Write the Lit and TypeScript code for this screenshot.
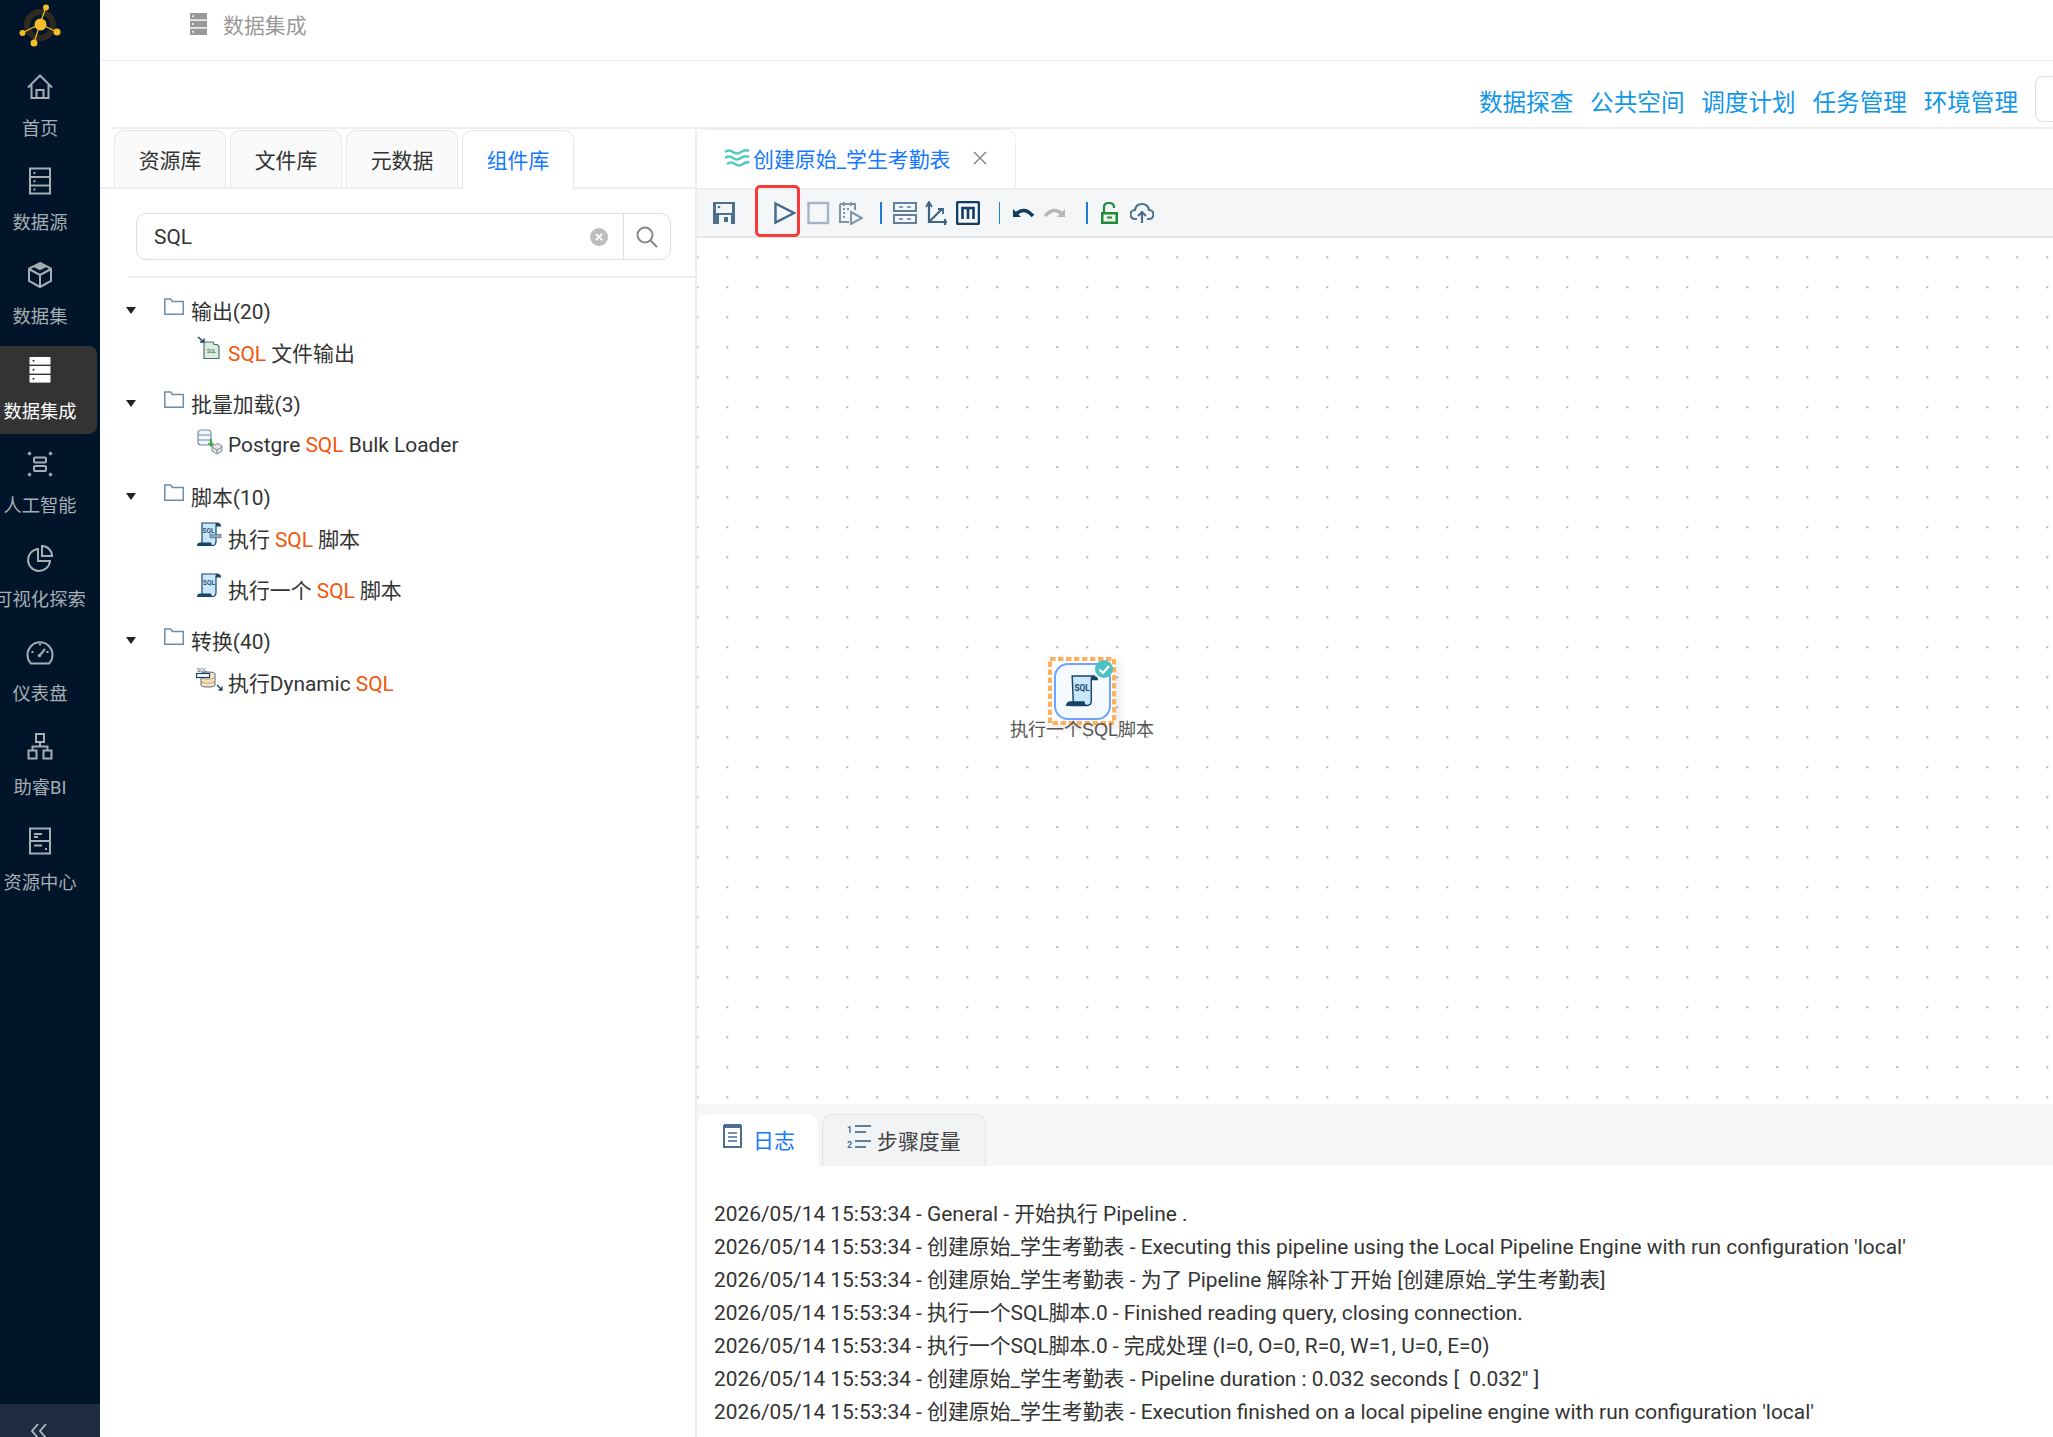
import { LitElement, html, css, svg } from "lit";
import { customElement } from "lit/decorators.js";

const navIcons: Record<string, any> = {
  home: html`<svg viewBox="0 0 28 28" class="ni"><path d="M2 14.5 14 2.5l12 12M5.5 12v13h17V12M10.5 25v-8h7v8"/></svg>`,
  server: html`<svg viewBox="0 0 28 28" class="ni"><rect x="4" y="1.5" width="20" height="25"/><path d="M4 10h20M4 18.500h20"/><path d="M7.500 6h2M7.500 14.200h2M7.500 22.500h2"/></svg>`,
  cube: html`<svg viewBox="0 0 28 28" class="ni"><path d="M14 2 25 7.500v12.500L14 26 3 20V7.500Z"/><path d="M3 8l11 6 11-6M14 14v12"/><path d="M14 3l6 3-6 3-6-3Z" class="fill"/></svg>`,
  active: html`<svg viewBox="0 0 28 28" class="nf"><rect x="3.500" y="1" width="21" height="7.600" fill="#fff"/><rect x="3.500" y="10" width="21" height="7.600" fill="#fff"/><rect x="3.500" y="19" width="21" height="7.600" fill="#fff"/><circle cx="7.500" cy="4.800" r="1" fill="#333"/><circle cx="7.500" cy="13.800" r="1" fill="#333"/><circle cx="7.500" cy="22.800" r="1" fill="#333"/></svg>`,
  ai: html`<svg viewBox="0 0 28 28" class="ni"><circle cx="3.500" cy="3.500" r="1.500" class="fill"/><circle cx="24.500" cy="3.500" r="1.500" class="fill"/><circle cx="3.500" cy="24.500" r="1.500" class="fill"/><circle cx="24.500" cy="24.500" r="1.500" class="fill"/><rect x="8" y="7.500" width="12" height="5" rx="1"/><rect x="8" y="16" width="12" height="5" rx="1"/></svg>`,
  pie: html`<svg viewBox="0 0 28 28" class="ni"><path d="M12 5A11 11 0 1 0 24 17H12Z"/><path d="M16 2a10 10 0 0 1 10 10H16Z"/></svg>`,
  gauge: html`<svg viewBox="0 0 28 28" class="ni"><path d="M5 25.500A12.500 12.500 0 1 1 23 25.500Z"/><path d="M14 17l5-6" /><path d="M14 5.500v2M5.500 14h2M20.500 14h2"/><circle cx="13.500" cy="17.500" r="1.500" class="fill"/></svg>`,
  org: html`<svg viewBox="0 0 28 28" class="ni"><rect x="10" y="2" width="8" height="8"/><rect x="2.500" y="18.500" width="8" height="8"/><rect x="17.500" y="18.500" width="8" height="8"/><path d="M14 10v4.500M6.500 18.500v-4h15v4"/></svg>`,
  res: html`<svg viewBox="0 0 28 28" class="ni"><rect x="4" y="1.500" width="20" height="25"/><path d="M4 14h20M8 7h8M8 10h4M8 18.500h8"/><path d="M19 22h2"/></svg>`,
};

const scroll = (s: number) => html`<svg width=${s} height=${s} viewBox="0 0 31 31">
  <path d="M6 1h20q-1.500 1-1.500 3v21q0 4-3.500 4.500H4q3-.5 3-4Z" fill="#c9e7fb" stroke="#174568" stroke-width="1.400"/>
  <path d="M24 1h3q4 0 4 3.500v.5h-6Z" fill="#174568"/>
  <path d="M0 30q0-4 4-4.500h14q0 3 3 4.500Z" fill="#174568"/>
  <text x="15.500" y="15.500" text-anchor="middle" font-family="Roboto, sans-serif" font-size="8" font-weight="700" fill="#174568">SQL</text>
</svg>`;

const leafIcons: Record<string, any> = {
  file: html`<svg width="26" height="26" viewBox="0 0 26 26"><path d="M1 1l6 5M7 2.500V6H3" fill="none" stroke="#1e3f5c" stroke-width="1.400"/><path d="M7 6h9l1 2.500 3 0 2 2v12H7Z" fill="#d9efdd" stroke="#4d6c84" stroke-width="1.200"/><text x="14.500" y="17" text-anchor="middle" font-family="Roboto, sans-serif" font-size="5" fill="#345">SQL</text></svg>`,
  bulk: html`<svg width="26" height="26" viewBox="0 0 26 26"><rect x="1" y="1" width="13" height="15" rx="3" fill="#f0f6fb" stroke="#6f8ba3" stroke-width="1.100"/><path d="M1 6h13M1 11h13" stroke="#6f8ba3" fill="none"/><path d="M14 10v6" stroke="#2aa52a" stroke-width="1.600"/><path d="M11.500 14l2.500 3 2.500-3" fill="none" stroke="#2aa52a" stroke-width="1.200"/><path d="M15 17l6-2.500 4 2.500v5l-5 3-5-3Z" fill="#e6e6e6" stroke="#7b8b99"/><path d="M15 18l5 3 5-3M20 21v4" fill="none" stroke="#7b8b99"/></svg>`,
  run: html`<svg width="25" height="25" viewBox="0 0 25 25"><path d="M5 1h15q-1 .7-1 2.500v16q0 3-2.500 4H3q2-.7 2-3Z" fill="#c9e7fb" stroke="#174568" stroke-width="1.200"/><path d="M19 1h2q3 0 3 3v.5h-5Z" fill="#174568"/><path d="M0 24q0-3.500 3-3.500h11q0 2 2.500 3.500Z" fill="#174568"/><text x="11.500" y="11" text-anchor="middle" font-family="Roboto, sans-serif" font-size="6.400" font-weight="600" fill="#174568">SQL</text><rect x="13" y="12.500" width="11" height="3.400" fill="#8ea7bc" stroke="#4d6c84" stroke-width=".6"/></svg>`,
  one: html`<svg width="25" height="25" viewBox="0 0 25 25"><path d="M5 1h15q-1 .7-1 2.500v16q0 3-2.500 4H3q2-.7 2-3Z" fill="#c9e7fb" stroke="#174568" stroke-width="1.200"/><path d="M19 1h2q3 0 3 3v.5h-5Z" fill="#174568"/><path d="M0 24q0-3.500 3-3.500h11q0 2 2.500 3.500Z" fill="#174568"/><text x="12" y="12" text-anchor="middle" font-family="Roboto, sans-serif" font-size="6.400" font-weight="600" fill="#174568">SQL</text></svg>`,
  dyn: html`<svg width="28" height="26" viewBox="0 0 28 26"><text x="1" y="5.500" font-family="Roboto, sans-serif" font-size="5.500" fill="#456">SQL</text><path d="M5 8q0-2 7-2t7 2v11q0 2-7 2t-7-2Z" fill="#fae2bd" stroke="#4d6c84"/><path d="M5 12q7 3 14 0M5 16q7 3 14 0" fill="none" stroke="#8a7a5a" stroke-width=".6"/><rect x=".5" y="7.500" width="13" height="4" fill="#fff" stroke="#1e4060" stroke-width="1.200"/><path d="M21 19l5 5M26 20.500V24h-3.500" fill="none" stroke="#1e3f5c" stroke-width="1.300"/></svg>`,
};

interface Leaf { icon: string; parts: (string | { sql: string })[]; gap?: boolean }
const S = { sql: "SQL" };
const tree: { name: string; leaves: Leaf[] }[] = [
  { name: "输出(20)", leaves: [{ icon: "file", parts: [S, " 文件输出"] }] },
  { name: "批量加载(3)", leaves: [{ icon: "bulk", parts: ["Postgre ", S, " Bulk Loader"] }] },
  { name: "脚本(10)", leaves: [{ icon: "run", parts: ["执行 ", S, " 脚本"] }, { icon: "one", parts: ["执行一个 ", S, " 脚本"], gap: true }] },
  { name: "转换(40)", leaves: [{ icon: "dyn", parts: ["执行Dynamic ", S] }] },
];

const logs = [
  "2026/05/14 15:53:34 - General - 开始执行 Pipeline .",
  "2026/05/14 15:53:34 - 创建原始_学生考勤表 - Executing this pipeline using the Local Pipeline Engine with run configuration 'local'",
  "2026/05/14 15:53:34 - 创建原始_学生考勤表 - 为了 Pipeline 解除补丁开始 [创建原始_学生考勤表]",
  "2026/05/14 15:53:34 - 执行一个SQL脚本.0 - Finished reading query, closing connection.",
  "2026/05/14 15:53:34 - 执行一个SQL脚本.0 - 完成处理 (I=0, O=0, R=0, W=1, U=0, E=0)",
  "2026/05/14 15:53:34 - 创建原始_学生考勤表 - Pipeline duration : 0.032 seconds [  0.032\" ]",
  "2026/05/14 15:53:34 - 创建原始_学生考勤表 - Execution finished on a local pipeline engine with run configuration 'local'",
];

const nav = [
  ["home", "首页"], ["server", "数据源"], ["cube", "数据集"], ["active", "数据集成"], ["ai", "人工智能"],
  ["pie", "可视化探索"], ["gauge", "仪表盘"], ["org", "助睿BI"], ["res", "资源中心"],
];

const t = (d: any, ml = 0) => html`<svg width="24" height="24" viewBox="0 0 24 24" style="margin-left:${ml}px">${d}</svg>`;

@customElement("app-root")
export class AppRoot extends LitElement {
  static styles = css`
    :host {
      display: flex; width: 2053px; height: 1437px; overflow: hidden; background: #fff;
      font-family: Roboto, "Noto Sans CJK SC", sans-serif; color: #333;
    }
    .side { width: 100px; flex: none; background: #00152a; display: flex; flex-direction: column; position: relative; }
    .logo { height: 63px; flex: none; display: block; }
    .navlist { display: flex; flex-direction: column; gap: 6.200px; flex: 1; }
    .item { width: 97px; height: 88px; display: flex; flex-direction: column; align-items: center; color: #a6adb4; font-size: 18.300px; border-radius: 0 8px 8px 0; padding: 10px 17px 0 0; box-sizing: border-box; }
    .item span { text-align: center; line-height: 26px; margin-top: 15px; white-space: nowrap; flex: none; }
    .item.on { background: #333; color: #fff; }
    .ni { width: 28px; height: 28px; fill: none; stroke: #a6adb4; stroke-width: 2; flex: none; }
    .ni .fill { fill: #a6adb4; stroke-width: 0.500; }
    .nf { width: 28px; height: 28px; flex: none; }
    .collapse { height: 33px; background: #1d2d3f; flex: none; display: flex; justify-content: center; align-items: flex-end; padding-right: 20px; }
    .collapse svg { display: block; }

    .main { flex: 1; min-width: 0; display: flex; flex-direction: column; }
    .crumb { height: 48px; padding-bottom: 12px; flex: none; border-bottom: 1px solid #eee; display: flex; align-items: center; padding-left: 90px; color: #999; font-size: 20.900px; gap: 16px; }
    .bar { height: 66px; flex: none; border-bottom: 2px solid #eee; margin-left: 12px; display: flex; align-items: center; justify-content: flex-end; color: #1296e8; font-size: 23.600px; }
    .bar .links { display: flex; gap: 16.800px; margin-right: 17px; padding-top: 13px; }
    .bar .box { width: 18px; height: 46px; border: 1px solid #ddd; border-right: 0; border-radius: 8px 0 0 8px; box-sizing: border-box; margin-top: 10px; flex: none; }

    .body { flex: 1; min-height: 0; display: flex; }
    .left { width: 597px; flex: none; border-right: 2px solid #eee; box-sizing: border-box; display: flex; flex-direction: column; }
    .ltabs { display: flex; gap: 4px; height: 60px; padding: 1px 0 0 14px; box-sizing: border-box; border-bottom: 2px solid #eee; flex: none; }
    .ltab { width: 112px; height: 57px; background: #fafafa; border: 1px solid #e8e8e8; border-bottom: 0; border-radius: 10px 10px 0 0; box-sizing: border-box; display: flex; align-items: center; justify-content: center; font-size: 20.900px; color: #333; }
    .ltab.on { background: #fff; color: #1677ff; height: 59px; padding-bottom: 2px; }
    .searchwrap { padding: 24px 24px 0 36px; flex: none; }
    .search { height: 47px; border: 1.500px solid #ddd; border-radius: 10px; display: flex; align-items: center; box-sizing: border-box; }
    .search .v { flex: 1; padding-left: 17px; font-size: 20.900px; color: #333; }
    .search .clear { width: 18px; height: 18px; margin-right: 15px; }
    .search .btn { width: 47px; height: 47px; border-left: 1.500px solid #ddd; display: flex; align-items: center; justify-content: center; box-sizing: border-box; flex: none; }
    .hr { height: 1.500px; background: #eee; margin: 16px 0 0 29px; flex: none; }
    .tree { padding: 11px 0 0 26px; display: flex; flex-direction: column; gap: 9px; font-size: 20.900px; }
    .group { display: flex; flex-direction: column; }
    .head { height: 42px; display: flex; align-items: center; }
    .arrow { width: 0; height: 0; border-left: 5.500px solid transparent; border-right: 5.500px solid transparent; border-top: 7px solid #222; flex: none; margin-top: 2px; }
    .folder { margin-left: 28px; margin-right: 7px; flex: none; margin-top: -7px; }
    .leaf { height: 42px; display: flex; align-items: center; padding-left: 69px; }
    .leaf.gap { margin-top: 9px; }
    .lic { width: 33px; flex: none; display: flex; justify-content: center; margin-top: -6px; padding-right: 4px; box-sizing: border-box; }
    .sql { color: #f2560d; }
    .ltext { white-space: pre; }

    .right { flex: 1; min-width: 0; display: flex; flex-direction: column; position: relative; }
    .etabs { height: 61px; flex: none; display: flex; box-sizing: border-box; border-bottom: 2px solid #eee; }
    .etab { width: 319px; height: 59px; border: 1px solid #eee; border-bottom: 0; border-left: 0; border-radius: 10px 10px 0 0; background: #fff; box-sizing: border-box; display: flex; align-items: center; color: #1677ff; font-size: 20.900px; padding: 0 0 2px 27px; }
    .etab .t { margin-left: 3px; white-space: nowrap; }
    .etab svg.x { margin-left: 23px; }
    .tools { height: 48px; flex: none; background: #f5f6f8; border-bottom: 2px solid #e4e5e7; display: flex; align-items: center; padding-left: 15px; box-sizing: border-box; }
    .tools svg { flex: none; display: block; }
    .sep { width: 1.500px; height: 22px; background: #1f7fd6; flex: none; }
    .s1 { margin-left: 17px; } .s2 { margin-left: 19px; }
    .runmark { position: absolute; left: 58px; top: 56px; width: 45px; height: 52px; border: 3.500px solid #f83a3a; border-radius: 5px; box-sizing: border-box; }
    .canvas { flex: 1; min-height: 0; position: relative;
      background-image: radial-gradient(circle at 15px 15px, #b4b4b4 0.9px, transparent 1.300px); background-size: 30px 30px; background-position: 15.300px 4.300px; }
    .node { position: absolute; left: 351px; top: 419px; width: 68px; height: 68px; box-sizing: border-box; display: flex; align-items: center; justify-content: center; background: #fff; box-shadow: 3px 3px 8px rgba(0,0,0,.1); }
    .dash { position: absolute; inset: 0; }
    .node .in { position: relative; width: 57px; height: 57px; border: 2px solid #6fa3ff; border-radius: 14px; background: #f5faff; display: flex; align-items: center; justify-content: center; box-sizing: border-box; flex: none; }
    .badge { position: absolute; left: 47px; top: 3px; width: 18px; height: 18px; border-radius: 50%; background: #4dc1c3; }
    .nlabel { position: absolute; left: 278px; width: 214px; top: 480px; text-align: center; font-family: "Liberation Sans", "Noto Sans CJK SC", sans-serif; font-size: 18px; line-height: 24px; color: #555; }

    .log { height: 333px; flex: none; display: flex; flex-direction: column; }
    .btabs { height: 62px; background: #f5f6f8; flex: none; display: flex; align-items: flex-end; gap: 4px; }
    .btab { height: 52px; border-radius: 10px 10px 0 0; box-sizing: border-box; display: flex; align-items: center; font-size: 20.900px; flex: none; padding-bottom: 2px; }
    .btab svg { margin-top: -6px; }
    .btab.on { width: 121px; background: #fff; color: #1677ff; padding-left: 26px; gap: 11px; }
    .btab.off { width: 164px; background: #f2f3f5; border: 1px solid #e2e3e5; border-bottom: 0; color: #444; padding-left: 24px; gap: 6px; }
    .lines { padding: 32px 0 0 17px; font-size: 20.900px; line-height: 33px; color: #333; white-space: pre; }
  `;

  render() {
    return html`
      <aside class="side">
        <svg class="logo" viewBox="0 0 100 63" width="100" height="63">
          <circle cx="40" cy="25" r="13" fill="none" stroke="#2f2a20" stroke-width="6"/>
          <path d="M46 7 40 24 22 33M40 24l-6 19M40 24l17 8" stroke="#f5bd27" stroke-width="1.200" fill="none"/>
          <circle cx="40.500" cy="24.500" r="6" fill="#f5bd27"/>
          <circle cx="46" cy="7.500" r="3" fill="#f5bd27"/><circle cx="22.500" cy="33" r="3" fill="#f5bd27"/>
          <circle cx="34" cy="43" r="3.500" fill="#f5bd27"/><circle cx="57" cy="32" r="3.500" fill="#f5bd27"/>
        </svg>
        <div class="navlist">
          ${nav.map(([ic, label]) => html`<div class="item ${ic === "active" ? "on" : ""}">${navIcons[ic]}<span>${label}</span></div>`)}
        </div>
        <div class="collapse">
          <svg width="20" height="14" viewBox="0 0 20 14"><path d="M8 1 2 8l6 7M16 1 10 8l6 7" fill="none" stroke="#b5bcc4" stroke-width="1.800"/></svg>
        </div>
      </aside>
      <div class="main">
        <div class="crumb">
          <svg width="17" height="22" viewBox="0 0 17 22"><rect width="17" height="6.400" fill="#999"/><rect y="7.800" width="17" height="6.400" fill="#999"/><rect y="15.600" width="17" height="6.400" fill="#999"/><circle cx="3" cy="3.200" r="1" fill="#fff"/><circle cx="3" cy="11" r="1" fill="#fff"/><circle cx="3" cy="18.800" r="1" fill="#fff"/></svg>
          <span>数据集成</span>
        </div>
        <div class="bar">
          <div class="links"><span>数据探查</span><span>公共空间</span><span>调度计划</span><span>任务管理</span><span>环境管理</span></div>
          <div class="box"></div>
        </div>
        <div class="body">
          <section class="left">
            <div class="ltabs">
              <div class="ltab">资源库</div><div class="ltab">文件库</div><div class="ltab">元数据</div><div class="ltab on">组件库</div>
            </div>
            <div class="searchwrap">
              <div class="search">
                <div class="v">SQL</div>
                <svg class="clear" viewBox="0 0 18 18"><circle cx="9" cy="9" r="9" fill="#bdbdbd"/><path d="M5.800 5.800l6.400 6.400M12.200 5.800l-6.400 6.400" stroke="#fff" stroke-width="1.800"/></svg>
                <div class="btn"><svg width="24" height="24" viewBox="0 0 24 24"><circle cx="10" cy="10" r="7.500" fill="none" stroke="#888" stroke-width="2"/><path d="M15.500 15.500 22 22" stroke="#888" stroke-width="2.200"/></svg></div>
              </div>
            </div>
            <div class="hr"></div>
            <div class="tree">
              ${tree.map((g) => html`<div class="group">
                <div class="head"><i class="arrow"></i>
                  <svg class="folder" width="20" height="17" viewBox="0 0 20 17"><path d="M.8 16.200V1h6l1.500 2.500h11v12.700Z" fill="#fff" stroke="#6d8ea8" stroke-width="1.500"/></svg>
                  <span>${g.name}</span></div>
                ${g.leaves.map((l) => html`<div class="leaf ${l.gap ? "gap" : ""}"><div class="lic">${leafIcons[l.icon]}</div><span class="ltext">${l.parts.map((p) => typeof p === "string" ? p : html`<span class="sql">${p.sql}</span>`)}</span></div>`)}
              </div>`)}
            </div>
          </section>
          <section class="right">
            <div class="etabs">
              <div class="etab">
                <svg width="26" height="20" viewBox="0 0 26 20"><path d="M1 4q4-3 8 0t8 0 8-1M1 10q4-3 8 0t8 0 8-1M3 16q4-3 8 0t8 0 6-1" fill="none" stroke="#55c8c4" stroke-width="2.600"/></svg>
                <span class="t">创建原始_学生考勤表</span>
                <svg class="x" width="14" height="14" viewBox="0 0 14 14"><path d="M1 1l12 12M13 1 1 13" stroke="#888" stroke-width="1.500"/></svg>
              </div>
            </div>
            <div class="tools">
              ${t(svg`<path d="M1 1h22v22H1Z" fill="#4a6f8f"/><rect x="4" y="3" width="16" height="9" fill="#f3f6f8"/><circle cx="7" cy="6" r="1.300" fill="#4a6f8f"/><rect x="7" y="14" width="12" height="9" fill="#f3f6f8"/><rect x="12" y="16" width="4" height="5" fill="#4a6f8f"/>`)}
              ${t(svg`<path d="M2.500 2.500 21 12 2.500 21.500Z" fill="none" stroke="#44688a" stroke-width="2.400"/>`, 37)}
              ${t(svg`<rect x="1.500" y="2" width="19.500" height="20" fill="none" stroke="#a3b4c4" stroke-width="2.400"/>`, 10)}
              ${t(svg`<path d="M1 3h15v6M1 3v18h9" fill="none" stroke="#7d95a9" stroke-width="2"/><path d="M5 1v4M12 1v4M4 8h2M8 8h2M4 12h2M4 16h2" stroke="#7d95a9" stroke-width="1.800"/><path d="M12 11l11 6-11 6Z" fill="none" stroke="#7d95a9" stroke-width="2"/>`, 8)}
              <i class="sep s1"></i>
              ${t(svg`<rect x="0" y="1" width="24" height="10" fill="#5f7f9a"/><rect x="0" y="13" width="24" height="10" fill="#5f7f9a"/><rect x="2" y="3" width="20" height="6" fill="#f4f6f8"/><rect x="2" y="15" width="20" height="6" fill="#f4f6f8"/><path d="M6 6h4M14 6h4M6 18h4M14 18h4" stroke="#5f7f9a" stroke-width="1.500"/>`, 11)}
              ${t(svg`<path d="M5 3v18h18M21 18v6M5 21 18 8" fill="none" stroke="#3f6482" stroke-width="2.200"/><path d="M2 6l3-5 3 5M14 8h5v5" fill="none" stroke="#3f6482" stroke-width="1.800"/>`, 7)}
              ${t(svg`<rect x="1" y="1" width="22" height="22" rx="2" fill="none" stroke="#123f62" stroke-width="2.600"/><path d="M6.500 18V7h11v11M12 7v11" fill="none" stroke="#123f62" stroke-width="2.600"/>`, 8)}
              <i class="sep s2"></i>
              ${t(svg`<path d="M2 8v8h8Z" fill="#0f3d60"/><path d="M5 13q8-8 17 2" fill="none" stroke="#0f3d60" stroke-width="3.500"/>`, 11)}
              ${t(svg`<path d="M22 8v8h-8Z" fill="#b5b8ba"/><path d="M19 13q-8-8-17 2" fill="none" stroke="#b5b8ba" stroke-width="3.500"/>`, 8)}
              <i class="sep s2"></i>
              ${t(svg`<rect x="3" y="11" width="17" height="12" fill="#1f8a3a"/><rect x="5.500" y="13.500" width="12" height="7" fill="#f0f5ee"/><rect x="9" y="15.500" width="5" height="2" fill="#1f8a3a"/><path d="M6 11V6q0-4 5-4t5 4v1" fill="none" stroke="#1f8a3a" stroke-width="2.200"/>`, 10)}
              ${t(svg`<path d="M7 18H5a4.500 4.500 0 0 1 0-9q1-6 7-6t7 6a4.500 4.500 0 0 1 0 9h-2" fill="none" stroke="#4a6f8f" stroke-width="2.200"/><path d="M12 22V11M8 15l4-4 4 4" fill="none" stroke="#4a6f8f" stroke-width="2.200"/>`, 8)}
            </div>
            <div class="runmark"></div>
            <div class="canvas">
              <div class="node">
                <svg class="dash" viewBox="0 0 68 68" width="68" height="68"><rect x="2" y="2" width="64" height="64" fill="none" stroke="#ffb05c" stroke-width="4" stroke-dasharray="5.500 2.500"/></svg>
                <div class="in">${scroll(32)}</div>
                <div class="badge"><svg width="18" height="18" viewBox="0 0 18 18"><path d="M4.500 9.500 8 13l6-7" fill="none" stroke="#fff" stroke-width="2.200"/></svg></div>
              </div>
              <div class="nlabel">执行一个SQL脚本</div>
            </div>
            <div class="log">
              <div class="btabs">
                <div class="btab on">
                  <svg width="19" height="24" viewBox="0 0 19 24"><rect x="1" y="2" width="17" height="21" fill="#fff" stroke="#4a6f8f" stroke-width="2"/><rect x="1" y="0" width="17" height="4" fill="#4a6f8f"/><path d="M5 9h9M5 13h9M5 17h9" stroke="#4a6f8f" stroke-width="1.600"/></svg>
                  <span>日志</span>
                </div>
                <div class="btab off">
                  <svg width="24" height="26" viewBox="0 0 24 26"><text x="0" y="9" font-family="Roboto, sans-serif" font-size="9" font-weight="700" fill="#4a6f8f">1</text><text x="0" y="24" font-family="Roboto, sans-serif" font-size="9" font-weight="700" fill="#4a6f8f">2</text><path d="M8 2h16M8 8h11M8 17h16M8 23h11" stroke="#5f7f9a" stroke-width="2.200"/></svg>
                  <span>步骤度量</span>
                </div>
              </div>
              <div class="lines">${logs.map((l) => html`<div>${l}</div>`)}</div>
            </div>
          </section>
        </div>
      </div>
    `;
  }
}
